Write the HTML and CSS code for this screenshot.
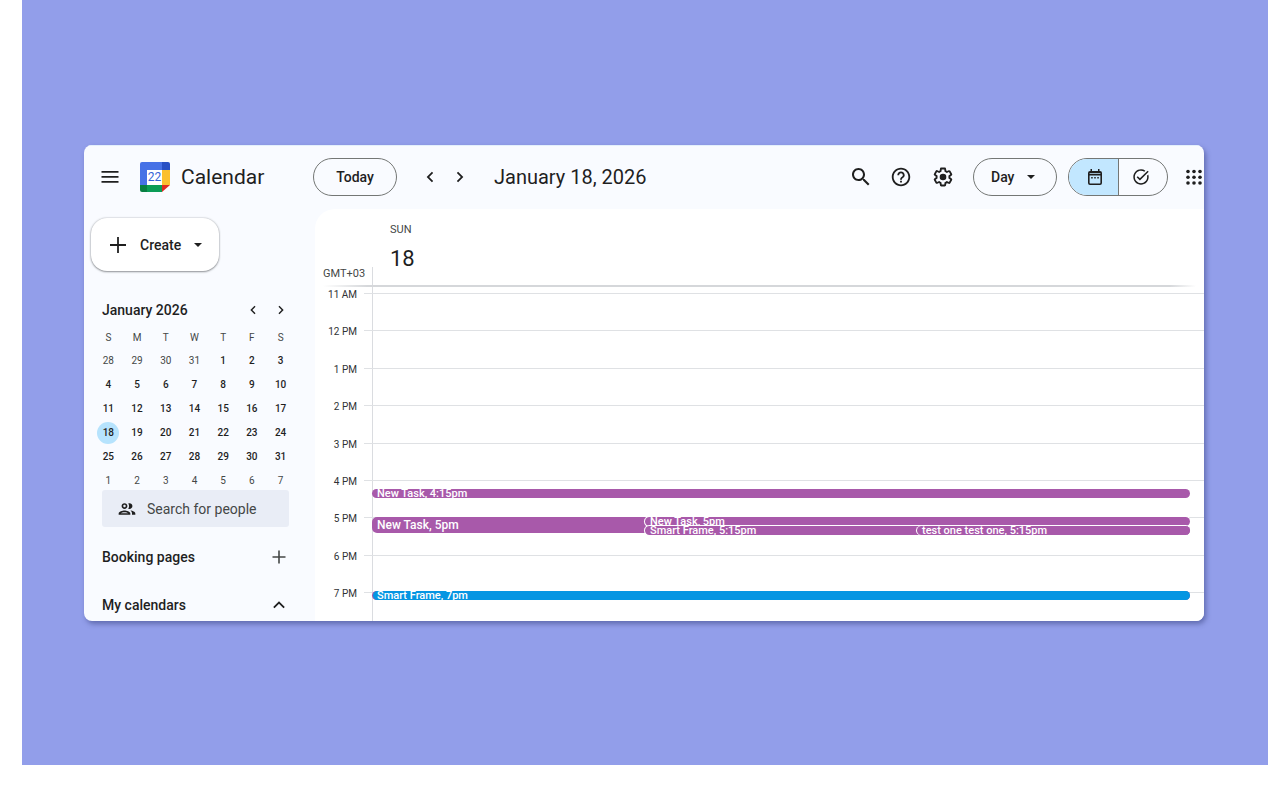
FILE: index.html
```
<!DOCTYPE html>
<html lang="en">
<head>
<meta charset="utf-8">
<meta name="viewport" content="width=device-width, initial-scale=1">
<title>Calendar</title>
<link rel="stylesheet" href="styles.css">
</head>
<body>
<div class="stage">
<div class="app">
  <header class="topbar">
    <div class="brand">
      <button class="icon-btn" aria-label="Main menu"><svg width="24" height="24" viewBox="0 0 24 24"><path d="M3.500 6h17v1.800h-17zM3.500 11h17v1.800h-17zM3.500 16h17v1.800h-17z"/></svg></button>
      <svg class="logo" width="30" height="30" viewBox="0 0 30 30" aria-hidden="true">
        <path fill="#4671e6" d="M2 0h20v8H7v15H0V2a2 2 0 0 1 2-2z"/>
        <path fill="#2850c4" d="M22 0h6a2 2 0 0 1 2 2v6h-8z"/>
        <path fill="#fbc02f" d="M22 8h8v15h-8z"/>
        <path fill="#0b9c56" d="M7 23h15v7H7z"/>
        <path fill="#087f42" d="M0 23h7v7H2a2 2 0 0 1-2-2z"/>
        <path fill="#e02a20" d="M22 23h8l-8 7z"/>
        <path fill="#fff" d="M7 8h15v15H7z"/>
        <text class="logo-day" x="14.500" y="19" text-anchor="middle">22</text>
      </svg>
      <span class="brand-name">Calendar</span>
    </div>
    <button class="pill today">Today</button>
    <div class="pager">
      <button class="icon-btn" aria-label="Previous day"><svg width="20" height="20" viewBox="0 0 24 24"><path d="M15.800 7.200 14.300 5.700 8 12l6.300 6.300 1.500-1.500L11 12z"/></svg></button>
      <button class="icon-btn" aria-label="Next day"><svg width="20" height="20" viewBox="0 0 24 24"><path d="M8.200 16.800 9.700 18.300 16 12 9.700 5.700 8.200 7.200 13 12z"/></svg></button>
    </div>
    <h1 class="date-title">January 18, 2026</h1>
    <div class="tools">
      <button class="icon-btn" aria-label="Search"><svg width="24" height="24" viewBox="0 0 24 24"><path d="M15.5 14h-.79l-.28-.27C15.41 12.59 16 11.11 16 9.5 16 5.91 13.09 3 9.5 3S3 5.91 3 9.5 5.91 16 9.5 16c1.61 0 3.09-.59 4.23-1.57l.27.28v.79l5 4.99L20.49 19l-4.99-5zm-6 0C7.01 14 5 11.99 5 9.5S7.01 5 9.5 5 14 7.01 14 9.5 11.99 14 9.5 14z"/></svg></button>
      <button class="icon-btn" aria-label="Support"><svg width="24" height="24" viewBox="0 0 26 26"><path transform="translate(1 1)" d="M11 18h2v-2h-2v2zm1-16C6.48 2 2 6.48 2 12s4.48 10 10 10 10-4.48 10-10S17.52 2 12 2zm0 18c-4.41 0-8-3.59-8-8s3.59-8 8-8 8 3.59 8 8-3.59 8-8 8zm0-14c-2.21 0-4 1.79-4 4h2c0-1.1.9-2 2-2s2 .9 2 2c0 2-3 1.75-3 5h2c0-2.25 3-2.5 3-5 0-2.21-1.79-4-4-4z"/></svg></button>
      <button class="icon-btn" aria-label="Settings"><svg width="24" height="24" viewBox="0 0 26 26"><g transform="translate(1 1)"><path d="M13.85 22.25h-3.7c-.74 0-1.36-.54-1.45-1.27l-.27-1.89c-.27-.14-.53-.29-.79-.46l-1.8.72c-.7.26-1.47-.03-1.81-.65L2.2 15.53c-.35-.66-.2-1.44.36-1.88l1.53-1.19c-.01-.15-.02-.3-.02-.46 0-.15.01-.31.02-.46l-1.52-1.19c-.59-.45-.74-1.26-.37-1.88l1.85-3.19c.34-.62 1.11-.9 1.79-.63l1.81.73c.26-.17.52-.32.78-.46l.27-1.91c.09-.7.71-1.25 1.44-1.25h3.7c.74 0 1.36.54 1.45 1.27l.27 1.89c.27.14.53.29.79.46l1.8-.72c.71-.26 1.48.03 1.82.65l1.84 3.18c.36.66.2 1.44-.36 1.88l-1.52 1.19c.01.15.02.3.02.46s-.01.31-.02.46l1.52 1.19c.56.45.72 1.23.37 1.86l-1.86 3.22c-.34.62-1.11.9-1.8.63l-1.8-.72c-.26.17-.52.32-.78.46l-.27 1.91c-.1.68-.72 1.22-1.46 1.22zm-3.23-2h2.76l.37-2.55.53-.22c.44-.18.88-.44 1.34-.78l.45-.34 2.38.96 1.38-2.4-2.03-1.58.07-.56c.03-.26.06-.51.06-.78s-.03-.53-.06-.78l-.07-.56 2.03-1.58-1.39-2.4-2.39.96-.45-.35c-.42-.32-.87-.58-1.33-.77l-.52-.22-.37-2.55h-2.76l-.37 2.55-.53.21c-.44.19-.88.44-1.34.79l-.45.33-2.38-.95-1.39 2.39 2.03 1.58-.07.56a7 7 0 0 0-.06.79c0 .26.02.53.06.78l.07.56-2.03 1.58 1.38 2.4 2.39-.96.45.35c.43.33.86.58 1.33.77l.53.22.38 2.55z"/><circle cx="12" cy="12" r="3.6"/></g></svg></button>
      <div class="view">
        <select class="pill view-select" aria-label="View"><option>Day</option><option>Week</option><option>Month</option></select>
        <svg class="view-arrow" width="8" height="4" viewBox="0 0 8 4" aria-hidden="true"><path d="M0 0h8L4 4z"/></svg>
      </div>
      <div class="switch">
        <button class="switch-btn selected" aria-label="Calendar view" aria-pressed="true"><svg width="20" height="20" viewBox="0 0 20 20"><path fill-rule="evenodd" d="M5.500 2h1.500v2h6V2h1.500v2H15a2 2 0 0 1 2 2v10a2 2 0 0 1-2 2H5a2 2 0 0 1-2-2V6a2 2 0 0 1 2-2h.5zM4.600 8.600V16c0 .3.200.4.400.4h10c.3 0 .4-.2.400-.4V8.600zM4.600 6.300V7h10.800V6.300zM6.200 10h1.500v1.500H6.200zm3.050 0h1.500v1.500h-1.500zm3.050 0h1.500v1.500h-1.500z"/></svg></button>
        <button class="switch-btn" aria-label="Tasks view" aria-pressed="false"><svg width="20" height="20" viewBox="0 0 26 26"><path transform="translate(1 1)" d="M22 5.180 10.590 16.600l-4.240-4.240 1.410-1.410 2.830 2.830 10-10zm-2.210 5.040c.13.57.21 1.170.21 1.780 0 4.420-3.580 8-8 8s-8-3.580-8-8 3.580-8 8-8c1.580 0 3.040.46 4.280 1.250l1.440-1.440A9.900 9.900 0 0 0 12 2C6.480 2 2 6.480 2 12s4.480 10 10 10 10-4.480 10-10c0-1.190-.22-2.330-.6-3.390z"/></svg></button>
      </div>
      <button class="icon-btn" aria-label="Google apps"><svg width="24" height="24" viewBox="0 0 24 24"><circle cx="6" cy="6.500" r="1.800"/><circle cx="12" cy="6.500" r="1.800"/><circle cx="18" cy="6.500" r="1.800"/><circle cx="6" cy="12.200" r="1.800"/><circle cx="12" cy="12.200" r="1.800"/><circle cx="18" cy="12.200" r="1.800"/><circle cx="6" cy="18" r="1.800"/><circle cx="12" cy="18" r="1.800"/><circle cx="18" cy="18" r="1.800"/></svg></button>
    </div>
  </header>

  <div class="body">
    <aside class="sidebar">
      <button class="create">
        <svg width="16" height="16" viewBox="0 0 16 16" aria-hidden="true"><path d="M7.100 0h1.800v7.100H16v1.800H8.900V16H7.100V8.900H0V7.100h7.100z"/></svg>
        <span>Create</span>
        <svg width="8" height="4" viewBox="0 0 8 4" aria-hidden="true"><path d="M0 0h8L4 4z"/></svg>
      </button>

      <section class="mini">
        <div class="mini-head">
          <h2 class="mini-title">January 2026</h2>
          <button class="icon-btn" aria-label="Previous month"><svg width="16" height="16" viewBox="0 0 24 24"><path d="M15.800 7.200 14.300 5.700 8 12l6.300 6.300 1.500-1.500L11 12z"/></svg></button>
          <button class="icon-btn" aria-label="Next month"><svg width="16" height="16" viewBox="0 0 24 24"><path d="M8.200 16.800 9.700 18.300 16 12 9.700 5.700 8.200 7.200 13 12z"/></svg></button>
        </div>
        <table class="month">
          <thead><tr><th>S</th><th>M</th><th>T</th><th>W</th><th>T</th><th>F</th><th>S</th></tr></thead>
          <tbody>
            <tr><td class="other">28</td><td class="other">29</td><td class="other">30</td><td class="other">31</td><td>1</td><td>2</td><td>3</td></tr>
            <tr><td>4</td><td>5</td><td>6</td><td>7</td><td>8</td><td>9</td><td>10</td></tr>
            <tr><td>11</td><td>12</td><td>13</td><td>14</td><td>15</td><td>16</td><td>17</td></tr>
            <tr><td><span class="current">18</span></td><td>19</td><td>20</td><td>21</td><td>22</td><td>23</td><td>24</td></tr>
            <tr><td>25</td><td>26</td><td>27</td><td>28</td><td>29</td><td>30</td><td>31</td></tr>
            <tr><td class="other">1</td><td class="other">2</td><td class="other">3</td><td class="other">4</td><td class="other">5</td><td class="other">6</td><td class="other">7</td></tr>
          </tbody>
        </table>
      </section>

      <label class="people">
        <svg width="20" height="20" viewBox="0 0 24 24" aria-hidden="true"><path d="M9 13.750c-2.340 0-7 1.170-7 3.500V19h14v-1.750c0-2.330-4.660-3.500-7-3.500zM4.340 17c.84-.58 2.870-1.250 4.660-1.250s3.820.67 4.660 1.250zM9 12c1.930 0 3.500-1.570 3.500-3.500S10.930 5 9 5 5.500 6.570 5.500 8.500 7.070 12 9 12zm0-5c.83 0 1.500.67 1.500 1.500S9.830 10 9 10s-1.500-.67-1.500-1.500S8.170 7 9 7zm7.040 6.810c1.160.84 1.960 1.960 1.960 3.440V19h4v-1.750c0-2.020-3.500-3.170-5.960-3.440zM15 12c1.930 0 3.500-1.570 3.500-3.500S16.930 5 15 5c-.54 0-1.040.13-1.500.35.63.89 1 1.980 1 3.150s-.37 2.260-1 3.150c.46.22.96.35 1.500.35z"/></svg>
        <input class="people-input" type="text" placeholder="Search for people" aria-label="Search for people">
      </label>

      <div class="side-row">
        <span>Booking pages</span>
        <button class="icon-btn" aria-label="Add booking page"><svg width="20" height="20" viewBox="0 0 20 20"><path fill="#444746" d="M9.200 3.500h1.600v5.700h5.700v1.600h-5.700v5.700H9.200v-5.700H3.500V9.200h5.700z"/></svg></button>
      </div>
      <div class="side-row">
        <span>My calendars</span>
        <button class="icon-btn" aria-label="Collapse my calendars"><svg width="20" height="20" viewBox="0 0 20 20"><path d="M10 6.200 4.200 12l1.300 1.300L10 8.800l4.500 4.500 1.300-1.300z"/></svg></button>
      </div>
    </aside>

    <main class="day">
      <div class="day-head">
        <div class="zone">GMT+03</div>
        <div class="day-label"><span class="weekday">SUN</span><span class="day-num">18</span></div>
      </div>
      <div class="hours">
        <div class="gap"></div>
        <div class="hour"><span>11 AM</span></div>
        <div class="hour"><span>12 PM</span></div>
        <div class="hour"><span>1 PM</span></div>
        <div class="hour"><span>2 PM</span></div>
        <div class="hour"><span>3 PM</span></div>
        <div class="hour"><span>4 PM</span></div>
        <div class="hour"><span>5 PM</span></div>
        <div class="hour"><span>6 PM</span></div>
        <div class="hour"><span>7 PM</span></div>
        <div class="events">
          <div class="event e-415">New Task, 4:15pm</div>
          <div class="event e-500">New Task, 5pm</div>
          <div class="event nested e-500b">New Task, 5pm</div>
          <div class="event nested e-515">Smart Frame, 5:15pm</div>
          <div class="event nested e-515b">test one test one, 5:15pm</div>
          <div class="event e-700-under"></div>
          <div class="event blue e-700">Smart Frame, 7pm</div>
        </div>
      </div>
    </main>
  </div>
</div>
</div>
</body>
</html>
```
FILE: styles.css
```
* { box-sizing: border-box; }

body {
  margin: 0;
  min-height: 100vh;
  display: flex;
  flex-direction: column;
  padding: 0 20px 23px 22px;
  background: #fff;
  color: #1f1f1f;
  font-family: Roboto, "Liberation Sans", sans-serif;
  font-size: 14px;
  line-height: 20px;
}

h1, h2 { margin: 0; font-weight: 400; }
svg { display: block; fill: #1f1f1f; flex: none; }
button, select, input { font: inherit; color: inherit; margin: 0; }
button { cursor: pointer; }

.stage {
  flex: 1;
  padding: 145px 64px 144px 62px;
  background: #929eea;
}

.app {
  overflow: hidden;
  border-radius: 8px;
  background: #f9fbff;
  box-shadow: 2px 3px 5px rgba(50, 60, 120, 0.5);
}

.icon-btn {
  display: grid;
  place-items: center;
  padding: 0;
  border: 0;
  background: none;
}

/* Top bar */
.topbar {
  display: flex;
  align-items: center;
  height: 64px;
  box-shadow: inset 0 1px #e3f0fc;
}

.brand {
  display: flex;
  align-items: center;
  width: 229px;
  padding-left: 14px;
  flex: none;
}

.logo { margin: 0 11px 0 18px; }
.logo-day { font-size: 12px; fill: #3462d8; }
.brand-name { font-size: 21px; line-height: 28px; }

.pill {
  height: 38px;
  border: 1px solid #747775;
  border-radius: 19px;
  background: transparent;
  font-weight: 500;
}

.today { width: 84px; flex: none; padding: 0; }
.pager { display: flex; gap: 10px; margin: 0 24px 0 23px; }
.date-title { font-size: 20px; line-height: 28px; white-space: nowrap; }

.tools {
  display: flex;
  align-items: center;
  flex: none;
  margin-left: auto;
  margin-right: -2px;
}

.tools > .icon-btn { margin-right: 18px; }
.tools > .icon-btn:first-child { margin-right: 16px; }
.tools > .icon-btn:last-child { margin-right: 0; }

.view { display: grid; align-items: center; margin-right: 11px; }
.view > * { grid-area: 1 / 1; }
.view-select { width: 84px; padding: 0 17px; appearance: none; }
.view-arrow { justify-self: end; margin-right: 22px; pointer-events: none; }

.switch {
  display: flex;
  width: 100px;
  height: 38px;
  margin-right: 14px;
  overflow: hidden;
  border: 1px solid #747775;
  border-radius: 19px;
}

.switch-btn {
  flex: 1;
  display: grid;
  place-items: center;
  padding: 0 4px 0 0;
  border: 0;
  background: none;
}

.switch-btn.selected { padding: 0 0 0 4px; background: #c2e7ff; border-right: 1px solid #747775; }

.body { display: flex; }

/* Sidebar */
.sidebar { width: 231px; flex: none; padding: 9px 26px 6px 7px; }

.create {
  display: flex;
  align-items: center;
  width: 128px;
  height: 53px;
  padding: 0 17px 0 19px;
  border: 0;
  border-radius: 16px;
  background: #fff;
  box-shadow: 0 1px 2px rgba(60, 64, 67, 0.5), 0 0 2px rgba(60, 64, 67, 0.35);
  font-weight: 500;
}

.create span { flex: 1; text-align: left; padding-left: 14px; }

.mini { padding: 29px 0 0 3px; }
.mini-head { display: flex; align-items: center; gap: 12px; padding: 0 0 7px 8px; }
.mini-title { flex: 1; font-size: 14px; font-weight: 500; }

.month {
  width: 201px;
  border-collapse: collapse;
  table-layout: fixed;
  font-size: 10px;
  line-height: 22px;
  text-align: center;
}

.month th { height: 22px; padding: 0; font-weight: 400; color: #444746; }
.month td { height: 24px; padding: 0; font-weight: 500; }
.month .other { color: #444746; font-weight: 400; }

.current {
  display: block;
  width: 22px;
  margin: 0 auto;
  border-radius: 50%;
  background: #b6e3fd;
}

.people {
  display: flex;
  align-items: center;
  gap: 10px;
  height: 37px;
  margin: -3px 0 20px 11px;
  padding-left: 15px;
  border-radius: 3px;
  background: #e9edf6;
}

.people-input {
  flex: 1;
  min-width: 0;
  padding: 0;
  border: 0;
  outline: 0;
  background: none;
}

.people-input::placeholder { color: #444746; opacity: 1; }

.side-row {
  display: flex;
  align-items: center;
  justify-content: space-between;
  padding-left: 11px;
  font-weight: 500;
}

.side-row + .side-row { margin-top: 28px; }

/* Day view */
.day {
  flex: 1;
  min-width: 0;
  border-top-left-radius: 20px;
  background: #fff;
}

.day-head {
  display: grid;
  grid-template-columns: 57px 1fr;
  height: 78px;
  border-bottom: 2px solid #d5d7da;
  border-image: linear-gradient(to right, transparent 1%, #d5d7da 6%, #d5d7da 96%, transparent 99%) 1;
}

.zone {
  align-self: end;
  padding: 0 0 3px 8px;
  font-size: 11px;
  line-height: 16px;
  color: #444746;
}

.day-label {
  display: flex;
  flex-direction: column;
  gap: 8px;
  padding: 13px 0 0 18px;
  background: linear-gradient(#dadce0, #dadce0) 0 100% / 1px 18px no-repeat;
}

.weekday { font-size: 11px; line-height: 16px; color: #444746; }
.day-num { font-size: 22px; line-height: 26px; }

.hours {
  position: relative;
  display: grid;
  grid-template-rows: 6px repeat(8, 1fr) 29px;
  height: 334px;
  background: linear-gradient(#dadce0, #dadce0) 57px 0 / 1px 100% no-repeat;
}

.hour {
  background: linear-gradient(#dfe1e4, #dfe1e4) 49px 0 / 100% 1px no-repeat;
}

.hour span {
  display: block;
  width: 42px;
  margin-top: -6px;
  font-size: 10px;
  line-height: 16px;
  text-align: right;
  color: #303234;
}

.events {
  position: absolute;
  inset: 0 14px 0 57px;
}

.event {
  position: absolute;
  left: 0;
  right: 0;
  height: 9px;
  padding-left: 5px;
  border-radius: 5px;
  background: #a859aa;
  color: #fff;
  font-size: 11px;
  font-weight: 500;
  line-height: 9px;
  white-space: nowrap;
}

.event.nested { box-shadow: 0 0 0 1px #fff; }
.event.blue { background: #0595e2; }

.e-415 { top: 202px; }
.event.e-500 { top: 230px; right: 66%; height: 16px; font-size: 12px; line-height: 16px; }
.event.e-500b { top: 230px; left: 273px; }
.event.e-515 { top: 239px; left: 273px; }
.event.e-515b { top: 239px; left: 545px; box-shadow: -1px 0 0 #fff; }
.e-700-under { top: 304px; }
.event.e-700 { top: 304px; left: 1px; padding-left: 4px; }
```
